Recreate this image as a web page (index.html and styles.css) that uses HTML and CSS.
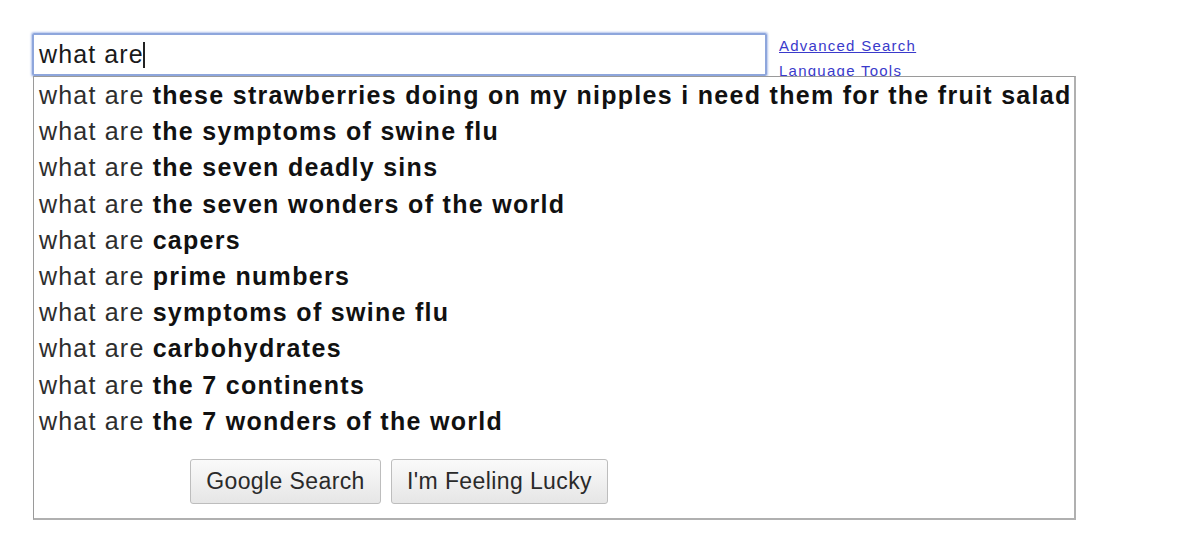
FILE: index.html
```html
<!DOCTYPE html>
<html>
<head>
<meta charset="utf-8">
<link rel="stylesheet" href="styles.css">
</head>
<body>
<div class="page">
  <div class="search">
    <div class="top">
      <div class="input"><span class="typed">what are</span><span class="caret"></span></div>
      <div class="links">
        <a href="#">Advanced Search</a>
        <a href="#">Language Tools</a>
      </div>
    </div>
    <div class="dropdown">
      <ul class="suggestions">
        <li>what are <b>these strawberries doing on my nipples i need them for the fruit salad</b></li>
        <li>what are <b>the symptoms of swine flu</b></li>
        <li>what are <b>the seven deadly sins</b></li>
        <li>what are <b>the seven wonders of the world</b></li>
        <li>what are <b>capers</b></li>
        <li>what are <b>prime numbers</b></li>
        <li>what are <b>symptoms of swine flu</b></li>
        <li>what are <b>carbohydrates</b></li>
        <li>what are <b>the 7 continents</b></li>
        <li>what are <b>the 7 wonders of the world</b></li>
      </ul>
      <div class="buttons">
        <button class="btn btn-search">Google Search</button>
        <button class="btn btn-lucky">I'm Feeling Lucky</button>
      </div>
    </div>
  </div>
</div>
</body>
</html>
```

FILE: styles.css
```css
html, body {
  margin: 0;
  padding: 0;
  background: #ffffff;
}

body {
  font-family: "Liberation Sans", Arial, Helvetica, sans-serif;
  color: #222;
}

.page {
  padding: 33px 0 40px 32px;
}

.top {
  display: flex;
  align-items: flex-start;
  height: 43px;
}

.input {
  box-sizing: border-box;
  width: 735px;
  height: 43px;
  flex: none;
  border: 2px solid #8ea6dc;
  border-radius: 2px;
  box-shadow: 0 0 2px 1px rgba(120, 150, 220, 0.55);
  display: flex;
  align-items: center;
  padding: 0 0 0 5px;
  font-size: 25px;
  letter-spacing: 1.1px;
  color: #1a1a1a;
}

.caret {
  display: inline-block;
  width: 2px;
  height: 26px;
  background: #222;
  margin-left: -1px;
}

.links {
  display: flex;
  flex-direction: column;
  margin-left: 12px;
  padding-top: 4px;
  gap: 7px;
}

.links a {
  font-size: 15px;
  letter-spacing: 1.25px;
  color: #3a3acb;
  text-decoration: underline;
  line-height: 18px;
}

.dropdown {
  position: relative;
  z-index: 1;
  margin-left: 1px;
  box-sizing: border-box;
  width: 1043px;
  height: 444px;
  background: #fff;
  border: 1px solid #9a9a9a;
  border-right: 2px solid #b0b0b0;
  border-bottom: 2px solid #b0b0b0;
}

.suggestions {
  list-style: none;
  margin: 0;
  padding: 0 0 0 5px;
}

.suggestions li {
  height: 36.2px;
  line-height: 36px;
  font-size: 25px;
  letter-spacing: 1.2px;
  color: #2e2e2e;
  white-space: nowrap;
}

.suggestions b {
  color: #111;
  letter-spacing: 1.3px;
}

.buttons {
  display: flex;
  gap: 10px;
  padding: 20px 0 0 156px;
}

.btn {
  box-sizing: border-box;
  height: 45px;
  border: 1px solid #bdbdbd;
  border-radius: 3px;
  background: linear-gradient(#fafafa, #e6e6e6);
  font-family: "Liberation Sans", Arial, sans-serif;
  font-size: 23px;
  letter-spacing: 0.4px;
  color: #2a2a2a;
  padding: 0;
}

.btn-search {
  width: 191px;
}

.btn-lucky {
  width: 217px;
}
```
